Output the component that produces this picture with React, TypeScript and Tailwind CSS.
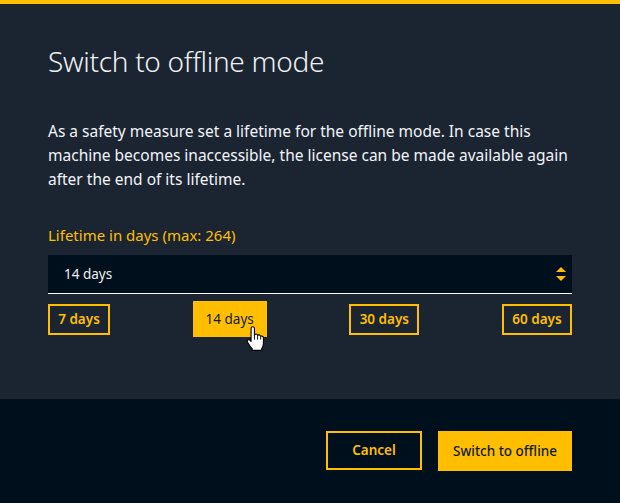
import { useState } from "react";

const presets = [7, 14, 30, 60];

function HandCursor() {
  return (
    <svg width="18" height="25" viewBox="0 0 16 22" className="pointer-events-none">
      <path
        d="M4.5 2 Q4.5 0.5 6 0.5 Q7.5 0.5 7.5 2 V8 Q8 7 9 7 Q10 7 10.3 8.3 Q10.8 7.6 11.8 7.8 Q12.8 8 13 9.2 Q13.5 8.6 14.4 8.9 Q15.5 9.3 15.5 10.5 V15 Q15.5 18 14 20 V21.5 H5.5 V20 Q3.5 18 1.5 14.5 Q0.5 12.8 1.8 12.2 Q3 11.8 4.5 13.5 Z"
        fill="#fff"
        stroke="#000"
        strokeWidth="1"
        strokeLinejoin="round"
      />
      <path d="M7.5 8 V12 M10.3 8.3 V12 M13 9.2 V12" stroke="#000" strokeWidth="0.8" />
    </svg>
  );
}

export default function App() {
  const [days, setDays] = useState(14);

  return (
    <div
      className="flex h-[503px] w-[620px] flex-col overflow-hidden bg-[#1b2532]"
      style={{ fontFamily: '"Noto Sans", "Open Sans", sans-serif' }}
    >
      <div className="h-[4px] bg-[#ffbf00]" />

      <div className="flex flex-1 flex-col px-12">
        <h1 className="mt-[39px] text-[28px] font-light leading-[36px] tracking-[-0.3px] text-[#eef0f2]">
          Switch to offline mode
        </h1>

        <p className="mt-[40px] text-[15.5px] leading-[24px] text-[#f2f4f8]">
          As a safety measure set a lifetime for the offline mode. In case this machine becomes
          inaccessible, the license can be made available again after the end of its lifetime.
        </p>

        <label className="mt-[32px] text-[15px] leading-[24px] text-[#ffbf00]">
          Lifetime in days (max: 264)
        </label>

        <div className="mt-[8px] flex h-[39px] items-center justify-between border-b border-white bg-[#000f1c] pl-4 pr-[5px]">
          <span className="text-[13.5px] text-[#eef0f2]">{days} days</span>
          <svg width="12" height="16" viewBox="0 0 12 16">
            <path d="M1 6 L6 1 L11 6 Z" fill="#ffbf00" />
            <path d="M1 10 L6 15 L11 10 Z" fill="#ffbf00" />
          </svg>
        </div>

        <div className="mt-[7px] flex h-[36px] items-center justify-between">
          {presets.map((d) =>
            d === days ? (
              <div key={d} className="relative">
                <button
                  onClick={() => setDays(d)}
                  className="flex h-[36px] w-[74px] items-center justify-center bg-[#ffbf00] text-[13.5px] text-[#111a24]"
                >
                  {d} days
                </button>
                <div className="absolute left-[53px] top-[25px]">
                  <HandCursor />
                </div>
              </div>
            ) : (
              <button
                key={d}
                onClick={() => setDays(d)}
                className={`flex h-[31px] items-center justify-center border-2 border-[#ffbf00] text-[13.5px] font-semibold text-[#ffbf00] ${
                  d === 7 ? "w-[62px]" : "w-[70px]"
                }`}
              >
                {d} days
              </button>
            )
          )}
        </div>
      </div>

      <div className="flex h-[104px] items-start justify-end gap-4 bg-[#000f1c] px-12 pt-[32px]">
        <button className="flex h-[39px] w-[96px] items-center justify-center border-2 border-[#ffbf00] text-[13.5px] font-semibold text-[#ffbf00]">
          Cancel
        </button>
        <button className="flex h-[40px] w-[134px] items-center justify-center bg-[#ffbf00] text-[13.5px] font-medium text-[#111a24]">
          Switch to offline
        </button>
      </div>
    </div>
  );
}
